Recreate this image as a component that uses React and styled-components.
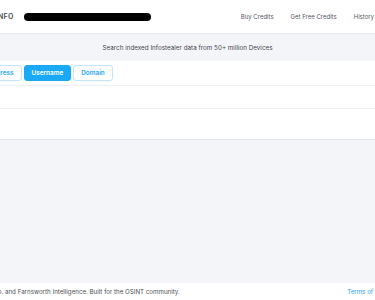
import React from 'react';
import styled, { createGlobalStyle } from 'styled-components';

const GlobalStyle = createGlobalStyle`
  html, body {
    margin: 0;
    padding: 0;
    height: 100%;
    overflow: hidden;
    background: #f4f5f9;
  }
  body {
    font-family: Inter, "Noto Sans", sans-serif;
  }
`;

const Viewport = styled.div`
  width: 375px;
  height: 300px;
  overflow: hidden;
`;

// the page is wider than the window, so it is clipped on both sides
const Page = styled.div`
  width: 495px;
  margin-left: -60px;
  height: 300px;
  display: flex;
  flex-direction: column;
  background: #f4f5f9;
`;

const Header = styled.header`
  height: 33px;
  background: #ffffff;
  border-bottom: 1px solid #e6e7ee;
  display: flex;
  align-items: center;
  justify-content: space-between;
  padding: 0 61px 0 15px;
  box-sizing: content-box;
`;

const Brand = styled.div`
  display: flex;
  align-items: center;
  gap: 10px;
`;

const Logo = styled.span`
  font-size: 7px;
  font-weight: 600;
  letter-spacing: 0.3px;
  color: #4a4d57;
`;

const Redacted = styled.span`
  display: block;
  width: 127px;
  height: 8px;
  border-radius: 4px;
  background: #000;
`;

const Nav = styled.nav`
  display: flex;
  gap: 17px;
`;

const NavLink = styled.a`
  font-size: 6px;
  color: #55585f;
  text-decoration: none;
`;

const Banner = styled.div`
  height: 26px;
  display: flex;
  align-items: center;
  justify-content: center;
  font-size: 6.3px;
  color: #44464d;
  padding-top: 1px;
`;

const TabRow = styled.div`
  background: #fff;
  height: 24px;
  display: flex;
  align-items: center;
  gap: 2px;
  padding-left: 10px;
  border-bottom: 1px solid #eef0f3;
`;

const Tab = styled.button`
  height: 16px;
  padding: 0 7px;
  border-radius: 3px;
  font-family: Inter, sans-serif;
  font-size: 6.4px;
  font-weight: 600;
  cursor: pointer;
  border: 1px solid ${p => (p.$active ? '#1aa9f5' : '#bfe4fb')};
  background: ${p => (p.$active ? '#1aa9f5' : '#fff')};
  color: ${p => (p.$active ? '#fff' : '#29a7ef')};
`;

const Row = styled.div`
  background: #fff;
  height: ${p => p.$h}px;
  border-bottom: 1px solid ${p => p.$line || '#eef0f3'};
`;

const Body = styled.div`
  flex: 1;
`;

const Footer = styled.footer`
  height: 17px;
  background: #fff;
  display: flex;
  align-items: center;
  justify-content: space-between;
  font-size: 6.2px;
  color: #4d5058;
`;

const Credit = styled.span`
  margin-left: -10px;
`;

const Terms = styled.a`
  color: #2aa3ec;
  text-decoration: none;
  margin-right: 38px;
`;

export default function App() {
  return (
    <>
      <GlobalStyle />
      <Viewport>
        <Page>
          <Header>
            <Brand>
              <Logo>STEALERS.INFO</Logo>
              <Redacted />
            </Brand>
            <Nav>
              <NavLink href="#">Buy Credits</NavLink>
              <NavLink href="#">Get Free Credits</NavLink>
              <NavLink href="#">History</NavLink>
            </Nav>
          </Header>
          <Banner>Search indexed Infostealer data from 50+ million Devices</Banner>
          <TabRow>
            <Tab>Email / IP Address</Tab>
            <Tab $active>Username</Tab>
            <Tab>Domain</Tab>
          </TabRow>
          <Row $h={22} />
          <Row $h={30} $line="#e2e4ec" />
          <Body />
          <Footer>
            <Credit>© 2024 Infostealers.info. and Farnsworth Intelligence. Built for the OSINT community.</Credit>
            <Terms href="#">Terms of Service</Terms>
          </Footer>
        </Page>
      </Viewport>
    </>
  );
}
